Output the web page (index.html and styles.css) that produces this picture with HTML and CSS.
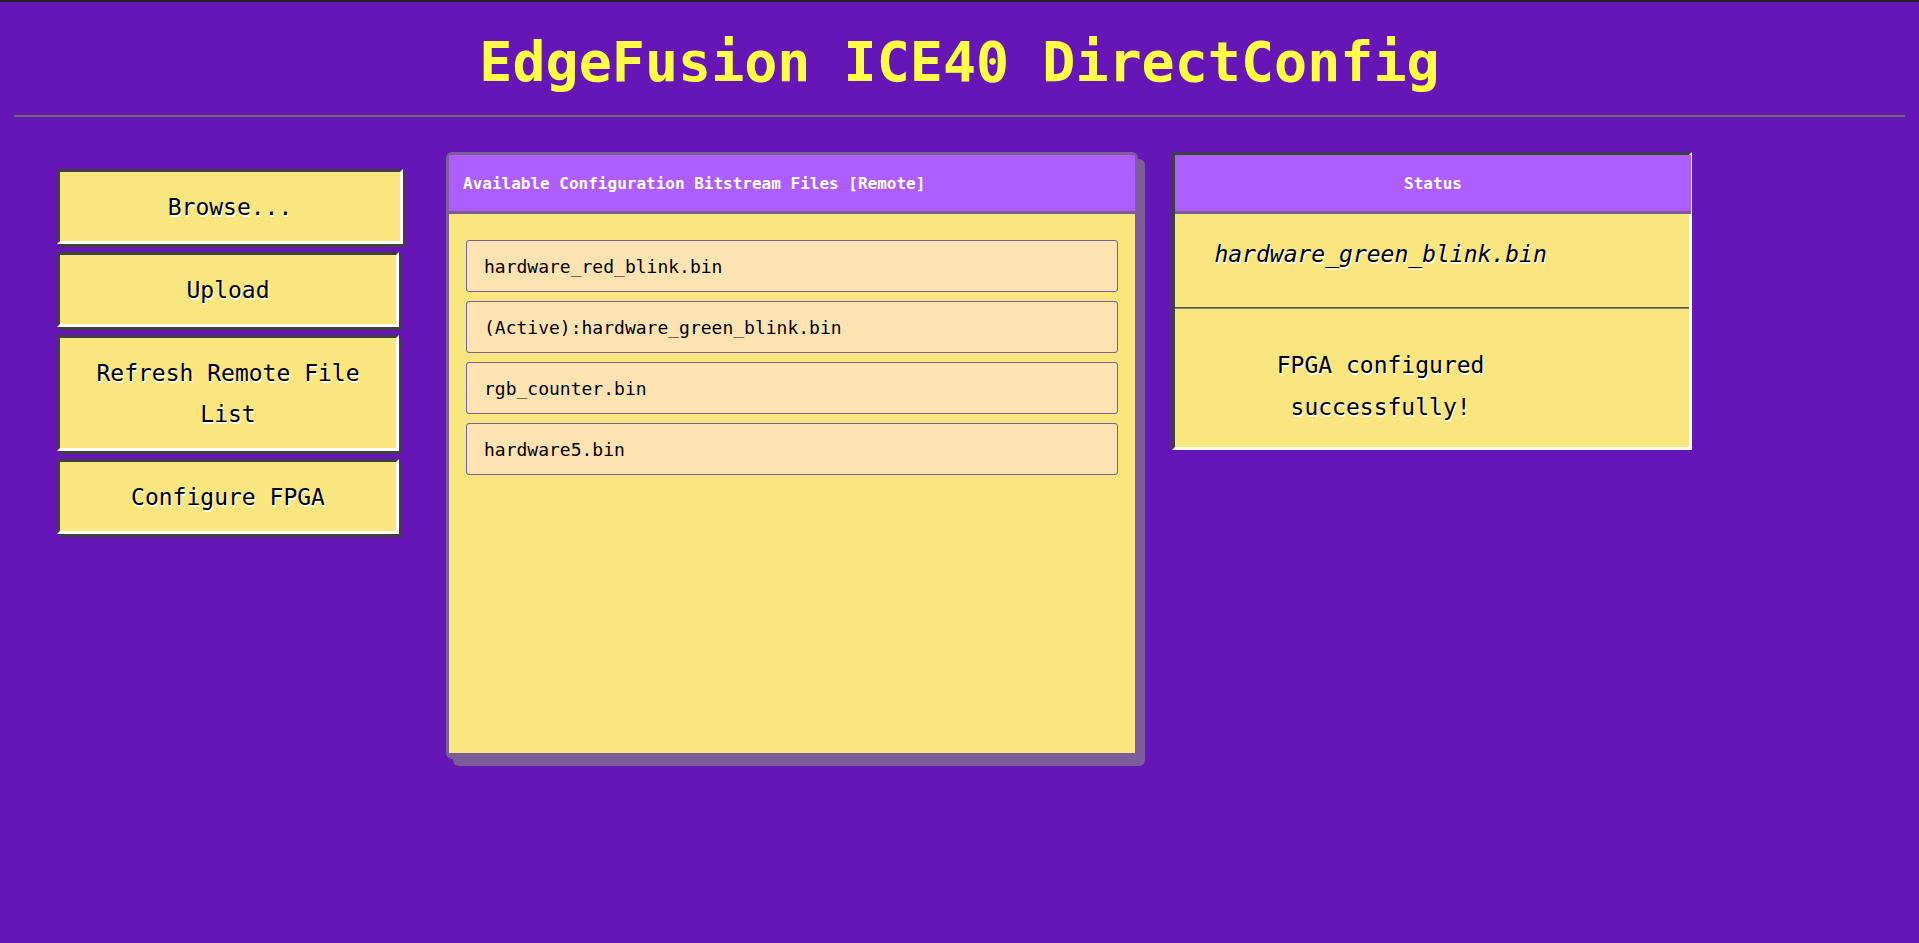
FILE: index.html
```html
<!DOCTYPE html>
<html lang="en">
<head>
<meta charset="utf-8">
<meta name="viewport" content="width=device-width, initial-scale=1">
<title>EdgeFusion ICE40 DirectConfig</title>
<link rel="stylesheet" href="styles.css">
</head>
<body>
<header class="page-header">
  <h1 class="page-title">EdgeFusion ICE40 DirectConfig</h1>
</header>
<main class="layout">
  <div class="actions">
    <button type="button" class="action action-browse">Browse...</button>
    <button type="button" class="action">Upload</button>
    <button type="button" class="action">Refresh Remote File List</button>
    <button type="button" class="action">Configure FPGA</button>
  </div>
  <section class="files">
    <h2 class="panel-title">Available Configuration Bitstream Files [Remote]</h2>
    <ul class="file-list">
      <li class="file">hardware_red_blink.bin</li>
      <li class="file">(Active):hardware_green_blink.bin</li>
      <li class="file">rgb_counter.bin</li>
      <li class="file">hardware5.bin</li>
    </ul>
  </section>
  <section class="status">
    <h2 class="panel-title status-title">Status</h2>
    <p class="status-file"><em>hardware_green_blink.bin</em></p>
    <hr class="divider">
    <p class="status-message">FPGA configured successfully!</p>
  </section>
</main>
</body>
</html>
```
FILE: styles.css
```css
* {
  box-sizing: border-box;
}

body {
  margin: 0;
  min-height: 100vh;
  padding: 0 14px;
  border-top: 2px solid #222222;
  background: #6615b6;
  color: #000000;
  font-family: "DejaVu Sans Mono", "Liberation Mono", monospace;
}

.page-header {
  padding: 24px 0 17px;
  border-bottom: 2px solid #6c6c6c;
}

.page-title {
  margin: 0;
  color: #ffff44;
  font-size: 55px;
  line-height: 72px;
  text-align: center;
}

.layout {
  display: grid;
  grid-template-columns: minmax(0, 355fr) minmax(0, 692fr) minmax(0, 520fr) minmax(0, 179fr);
  column-gap: 34px;
  align-items: start;
  padding: 35px 0 40px 43px;
}

.actions {
  display: flex;
  flex-direction: column;
  gap: 8px;
  padding: 17px 13px 0 0;
}

.action {
  padding: 15px 24px 13px;
  border: 3px solid;
  border-color: #404040 #ffffff #ffffff #404040;
  background: #fae67e;
  box-shadow: 3px 3px 0 #404040;
  color: #000000;
  font-family: inherit;
  font-size: 23px;
  line-height: 41px;
  text-shadow: 1px 2px 0 #ffffff;
}

.action-browse {
  margin-right: -4px;
}

.files {
  min-height: 607px;
  border: 3px solid #7c5d98;
  border-bottom-width: 6px;
  border-radius: 6px;
  background: #fae67e;
  box-shadow: 7px 7px 0 #7c5d98;
}

.panel-title {
  margin: 0;
  padding: 17px 14px 15px;
  border-bottom: 3px solid #7c5d98;
  background: #ae5eff;
  color: #ffffff;
  font-size: 16px;
  line-height: 24px;
}

.file-list {
  display: flex;
  flex-direction: column;
  gap: 9px;
  margin: 0;
  padding: 26px 17px;
  list-style: none;
}

.file {
  padding: 13px 17px 11px;
  border: 1px solid #7c5d98;
  border-radius: 3px;
  background: #fee3b2;
  font-size: 18px;
  line-height: 26px;
}

.status {
  border: 3px solid;
  border-color: #404040 #ffffff #ffffff #404040;
  background: #fae67e;
  font-size: 23px;
  line-height: 42px;
  text-shadow: 1px 2px 0 #ffffff;
}

.status-title {
  margin-right: -2px;
  text-align: center;
  text-shadow: none;
}

.status-file {
  width: 80%;
  margin: 0;
  padding: 19px 0 32px;
  text-align: center;
}

.divider {
  height: 2px;
  margin: 0;
  border: 0;
  border-top: 1px solid #55554a;
  background: #85857c;
}

.status-message {
  width: 80%;
  margin: 0;
  padding: 35px 64px 19px;
  text-align: center;
}
```
